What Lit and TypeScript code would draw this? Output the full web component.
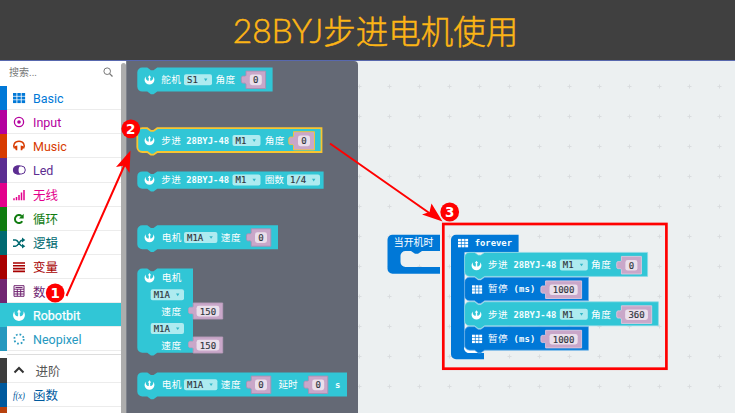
import { LitElement, html, css, svg } from "lit";
import { customElement } from "lit/decorators.js";

const TEAL = "#31c6d6";
const BLUE = "#0078d7";

const robot = (cx: number, cy: number, s = 1) => svg`
  <g transform="translate(${cx} ${cy}) scale(${s})" fill="#fff">
    <path d="M-4.200-3.600C-7-1-5.800 5.600 0 5.600S7-1 4.200-3.600C4.900-1.200 3.300 1.300.9 1.300L.7-2.300 1.900-2.600 0-5.200-1.900-2.600-.7-2.300-.9 1.300C-3.300 1.300-4.900-1.200-4.200-3.600Z"/>
  </g>`;

const grid = (x: number, y: number, color = "#fff", w = 10) => {
  const cw = w * 0.29, ch = w * 0.24;
  return svg`<g fill=${color}>${[0, 1, 2].map((r) => [0, 1, 2].map((c) => svg`
    <rect x=${x + c * w * 0.36} y=${y + r * w * 0.3} width=${cw} height=${ch}/>`))}</g>`;
};

// Statement block outline with the notch on top and the matching tab below
const block = (x: number, y: number, r: number, b: number, fill: string, stroke = "none", sw = 0) => svg`
  <path fill=${fill} stroke=${stroke} stroke-width=${sw}
    d="M${x} ${y + 5}a5 5 0 0 1 5-5H${x + 10}l3.6 2.7h2.6L${x + 20} ${y}H${r}V${b}H${x + 20}l-3.8 2.7h-2.6L${x + 10} ${b}H${x + 5}a5 5 0 0 1-5-5Z"/>`;

const cjk = (t: string, x: number, cy: number, w: number) => svg`
  <text class="cjk" x=${x} y=${cy + 3.7} textLength=${w}>${t}</text>`;

const mono = (t: string, x: number, cy: number, w: number) => svg`
  <text class="mono" x=${x} y=${cy + 3.2} textLength=${w}>${t}</text>`;

const drop = (t: string, x: number, cy: number, w: number) => svg`
  <rect x=${x} y=${cy - 5.5} width=${w} height="11" rx="2" fill="#aeebf0"/>
  <text class="val" x=${x + 3} y=${cy + 3.4} textLength=${t.length * 5.4}>${t}</text>
  <path d="M${x + w - 8} ${cy - 1.2}h3.4l-1.7 2.6Z" fill="#31b6c6"/>`;

const num = (t: string, x: number, cy: number, w: number, stroke = "#aa8fb2", h = 17.4) => {
  const iw = t.length * 5.4 + 6.6, ix = x + (w - iw) / 2, top = cy - h / 2;
  return svg`
    <path fill="#c9a7c9" stroke=${stroke} stroke-width=".9"
      d="M${x} ${top}h${w}v${h}h${-w}v${-4.5}c-1-2.2-4.7 1-4.7-3V${cy - 1.5}c0-4 3.700-1 4.700-3Z"/>
    <rect x=${ix} y=${cy - 5.2} width=${iw} height="10.6" rx="2.4" fill="#eadfeb"/>
    <text class="val" x=${x + w / 2 - t.length * 2.7} y=${cy + 3.6} textLength=${t.length * 5.4}>${t}</text>`;
};

const catIcons: Record<string, unknown> = {
  basic: grid(4, 3, BLUE, 12),
  input: svg`<circle cx="10" cy="8" r="4.600" fill="none" stroke="#b4009e" stroke-width="1.300"/><circle cx="10" cy="8" r="1.800" fill="#b4009e"/>`,
  music: svg`<path d="M5.500 10.500C3.600 7 5.500 3.300 10 3.300s6.400 3.700 4.500 7.200" fill="none" stroke="#d83b01" stroke-width="1.500"/><path d="M5.300 8.300 8.300 7.400V12.300H6.800ZM14.700 8.300 11.700 7.400V12.300H13.200Z" fill="#d83b01"/>`,
  led: svg`<rect x="4.300" y="4" width="12" height="8" rx="4" fill="none" stroke="#5c2d91" stroke-width="1"/><path d="M8.500 3.600a4.400 4.400 0 0 0 0 8.800h2.800c-2.300-2-2.300-6.600 0-8.800Z" fill="#5c2d91"/>`,
  radio: svg`<path d="M5 13.300v-2M7.500 13.300V10M10 13.300V8M12.500 13.300V5.500M15 13.300V3" stroke="#e3008c" stroke-width="1.500"/>`,
  loops: svg`<path d="M13.300 10.200A4 4 0 1 1 12.600 5" fill="none" stroke="#107c10" stroke-width="2"/><path d="M14.700 2.800v4.800H9.900Z" fill="#107c10"/>`,
  logic: svg`<path d="M4 5h2.500c3 0 4 6.200 7 6.200H14M4 11.200h2.500c3 0 4-6.200 7-6.200H14" fill="none" stroke="#006970" stroke-width="1.500"/><path d="M13 2.600 16.300 5 13 7.400ZM13 8.800l3.300 2.400L13 13.600Z" fill="#006970"/>`,
  vars: svg`<path d="M4 4h12M4 6.800h12M4 9.600h12M4 12.400h12" stroke="#a80000" stroke-width="1.600"/>`,
  math: svg`<path d="M5 2.700h10v10.600H5ZM5 6.200h10M5 8.600h10M5 11h10M8.300 6v7M11.700 6v7M6.500 4.500h7" fill="none" stroke="#712672" stroke-width="1"/>`,
  robot: robot(10, 8, 1.05),
  neo: svg`<circle cx="10" cy="8" r="4.700" fill="none" stroke="#2699bf" stroke-width="1.800" stroke-dasharray="1.700 1.990"/>`,
  up: svg`<path d="M5.500 10.500 10 6l4.500 4.500" fill="none" stroke="#333" stroke-width="2"/>`,
  fx: svg`<text x="4" y="11.500" font-family="Liberation Serif, serif" font-style="italic" font-size="10.500" fill="#005a9e" textLength="12" lengthAdjust="spacingAndGlyphs">f(x)</text>`,
};

const cats = [
  ["basic", "Basic", BLUE, "c-basic"],
  ["input", "Input", "#b4009e", "c-input"],
  ["music", "Music", "#d83b01", "c-music"],
  ["led", "Led", "#5c2d91", "c-led"],
  ["radio", "无线", "#e3008c", "c-radio"],
  ["loops", "循环", "#107c10", "c-loops"],
  ["logic", "逻辑", "#006970", "c-logic"],
  ["vars", "变量", "#a80000", "c-vars"],
  ["math", "数", "#712672", "c-math"],
  ["robot", "Robotbit", TEAL, "c-robot"],
  ["neo", "Neopixel", "#2699bf", "c-neo"],
];
const more = [
  ["up", "进阶", "#3c3c3c", "c-up"],
  ["fx", "函数", "#005a9e", "c-fx"],
  ["", "", "#b7410e", ""],
];

@customElement("block-toolbox")
export class BlockToolbox extends LitElement {
  static styles = css`
    :host { display: flex; width: 127px; flex: none; background: #fff; font: 12.500px Roboto, "Noto Sans CJK SC", sans-serif; }
    .list { width: 121px; flex: none; overflow: hidden; }
    .search { height: 25px; display: flex; align-items: center; justify-content: space-between; padding: 0 8px 4px 9px; box-sizing: border-box; color: #777; font-size: 10px; }
    .row { height: 24.140px; display: flex; align-items: center; box-sizing: border-box; border-left: 7px solid var(--c); color: var(--c); position: relative; }
    .row::after { content: ""; position: absolute; left: 0; right: 0; bottom: 0; height: 1px; background: #ececec; }
    .row svg { width: 20px; height: 16px; margin: 0 4px 0 2px; flex: none; }
    .row.c-robot { background: #31c6d6; color: #fff; -webkit-text-stroke: .25px #fff; }
    .row.c-up { color: #555; }
    .c-up span { padding-left: 2.500px; }
    .gap { height: 7px; box-sizing: border-box; display: flex; align-items: center; }
    .gap::after { content: ""; height: 1px; width: 114px; margin-left: 7px; background: #ddd; }
    .bar { width: 5px; margin: 2px 0 0; border-radius: 3px 3px 0 0; background: #adadad; }
    .edge { width: 1px; background: #7e828b; }
  `;
  row(c: string[]) {
    return html`<div class="row ${c[3]}" style="--c:${c[2]}">
      ${c[0] ? html`<svg viewBox="0 0 20 16">${catIcons[c[0]]}</svg><span>${c[1]}</span>` : ""}</div>`;
  }
  render() {
    return html`<div class="list">
        <div class="search"><span>搜索...</span>
          <svg width="10" height="10" viewBox="0 0 10 10"><path d="M6.600 6.600 9.500 9.500" stroke="#777" stroke-width="1.300"/><circle cx="4.200" cy="4.200" r="3.300" fill="none" stroke="#777" stroke-width="1"/></svg>
        </div>
        ${cats.map((c) => this.row(c))}
        <div class="gap"></div>
        ${more.map((c) => this.row(c))}
      </div>
      <div class="bar"></div><div class="edge"></div>`;
  }
}

const canvasText = css`
  :host { display: block; }
  svg { display: block; }
  .cjk { font: 9.600px "Noto Sans CJK SC", sans-serif; fill: #fff; }
  .mono { font: bold 8.900px "DejaVu Sans Mono", monospace; fill: #f4feff; }
  .val { font: 9px "DejaVu Sans Mono", monospace; fill: #30353d; stroke: #30353d; stroke-width: .15px; }
`;

@customElement("block-flyout")
export class BlockFlyout extends LitElement {
  static styles = [canvasText, css`
    :host { width: 231px; flex: none; background: #646975; border-radius: 0 4px 0 0; }
  `];
  render() {
    return html`<svg width="231" height="352" viewBox="127 61 231 352">
      ${block(137.3, 67.5, 272.6, 91.6, TEAL)}
      ${robot(149.5, 79.7, 0.87)}${cjk("舵机", 161.3, 79.5, 19.5)}${drop("S1", 184, 79.8, 28)}
      ${cjk("角度", 215.6, 79.5, 19.5)}${num("0", 246, 79.8, 19.6)}

      ${block(137.3, 128.200, 321.5, 152, TEAL, "#f7c531", 1.800)}
      ${robot(149.5, 140.5, 0.87)}${cjk("步进", 161.3, 140.2, 19.5)}${mono("28BYJ-48", 186.2, 140.5, 43)}
      ${drop("M1", 232.5, 140.500, 28)}${cjk("角度", 264.8, 140.2, 19.5)}
      ${num("0", 293.5, 140.8, 21, "#f7c531", 18.2)}

      ${block(137.3, 171.4, 323.6, 188.800, TEAL)}
      ${robot(149.5, 180, 0.87)}${cjk("步进", 161.3, 179.6, 19.5)}${mono("28BYJ-48", 186.2, 179.900, 43)}
      ${drop("M1", 232.5, 180, 28)}${cjk("圈数", 264.8, 179.6, 19)}${drop("1/4", 287, 180, 33)}

      ${block(137.3, 225.3, 278, 249.2, TEAL)}
      ${robot(149.5, 237.4, 0.87)}${cjk("电机", 161.8, 237.1, 19.5)}${drop("M1A", 184, 237.4, 33.4)}
      ${cjk("速度", 220.800, 237.1, 19.8)}${num("0", 251.2, 237.5, 19.6)}

      ${block(137.3, 268.6, 193, 352.700, TEAL)}
      ${robot(149.5, 277.600, 0.87)}${cjk("电机", 161.8, 277.2, 19.5)}${drop("M1A", 150.7, 294.8, 33.3)}
      ${cjk("速度", 161.2, 310.900, 19.8)}${num("150", 193.2, 311, 29.5, "#b99cbb", 16)}
      ${drop("M1A", 150.7, 328.6, 33.3)}
      ${cjk("速度", 161.2, 345, 19.8)}${num("150", 193.2, 345, 29.5, "#b99cbb", 16)}

      ${block(137.3, 372.4, 347, 396.5, TEAL)}
      ${robot(149.5, 384.8, 0.87)}${cjk("电机", 161.8, 384.4, 19.5)}${drop("M1A", 184, 384.7, 33.4)}
      ${cjk("速度", 220.800, 384.4, 19.8)}${num("0", 251.2, 384.8, 19.6)}
      ${cjk("延时", 278.6, 384.4, 19)}${num("0", 308.6, 384.8, 19.2)}${mono("s", 335, 384.900, 5.4)}
    </svg>`;
  }
}

@customElement("block-workspace")
export class BlockWorkspace extends LitElement {
  static styles = [canvasText, css`
    :host { flex: 1; background: #ecf0f1; }
    .thin { font: 9.900px "Noto Sans CJK SC", sans-serif; fill: #fff; }
  `];
  step(y: number, right: number, val: string, w: number) {
    const cy = y + 12.5;
    return svg`${block(464.6, y, right, y + 24, TEAL, "#8fdbe8", 0.7)}
      ${robot(476.5, cy + .4, 0.87)}${cjk("步进", 488, cy - .4, 19.5)}${mono("28BYJ-48", 513.4, cy, 43)}
      ${drop("M1", 559.8, cy, 28)}${cjk("角度", 591, cy - .4, 19.8)}${num(val, 621.4, cy + .300, w, "#e0c6dd", 17.6)}`;
  }
  pause(y: number) {
    const cy = y + 12;
    return svg`${block(464.6, y, 588.5, y + 23.6, BLUE, "#6bb0ea", 0.7)}
      ${grid(472, cy - 3.9)}${cjk("暂停", 488, cy - .6, 19.5)}${mono("(ms)", 513.400, cy - .2, 22)}
      ${num("1000", 545.6, cy + .5, 36, "#e0c6dd", 17.6)}`;
  }
  render() {
    return html`<svg width="377" height="352" viewBox="358 61 377 352">
      <defs><pattern id="plus" x="374" y="71" width="30" height="30" patternUnits="userSpaceOnUse">
        <path d="M13.500 15.500h4M15.500 13.500v4" stroke="#dadddf" stroke-width="1"/></pattern></defs>
      <rect x="358" y="61" width="377" height="352" fill="url(#plus)"/>
      <path fill=${BLUE} d="M387.500 239.700a5 5 0 0 1 5-5H440V251H422l-4 2.700h-3L411 251h-5.500a5 5 0 0 0-5 5v6a5 5 0 0 0 5 5H440v6.700H392.500a5 5 0 0 1-5-5Z"/>
      <text class="thin" x="393.800" y="246" textLength="39.500">当开机时</text>
      <path fill=${BLUE} d="M451 239.700a5 5 0 0 1 5-5H518.600V252.300H464.500V348a5 5 0 0 0 5 5H484v6.200H456a5 5 0 0 1-5-5Z"/>
      <path fill="#fff" d="M464 347c0 4 2 6 6 6h12v-3h-14Z"/>
      ${grid(458, 238.900)}${mono("forever", 474.700, 242.800, 37.300)}
      ${this.pause(326.6)}${this.step(301.800, 658.4, "360", 30.3)}
      ${this.pause(277.200)}${this.step(252.400, 647.6, "0", 20)}
    </svg>`;
  }
}

@customElement("app-root")
export class AppRoot extends LitElement {
  static styles = css`
    :host { display: flex; flex-direction: column; width: 735px; height: 413px; overflow: hidden; position: relative; }
    header { height: 60px; flex: none; box-sizing: border-box; background: #404040; color: #fdb515; display: flex; align-items: center; justify-content: center; white-space: nowrap; padding: 0 0 1px 16px; -webkit-text-stroke: .5px #fdb515; }
    .latin { font: 300 33.500px Lato, sans-serif; width: 90.500px; }
    .han { font: 300 32.500px "Noto Sans CJK SC", sans-serif; width: 195px; }
    .rule { height: 1px; background: #5868ae; flex: none; }
    main { display: flex; flex: 1; min-height: 0; background: #ecf0f1; }
    .marks { position: absolute; inset: 0; }
    .n { font: bold 13.500px "DejaVu Sans", sans-serif; fill: #fff; text-anchor: middle; }
  `;
  badge(n: string, x: number, y: number) {
    return svg`<circle cx=${x} cy=${y} r="9.400" fill="#f00"/><text class="n" x=${x} y=${y + 4.8}>${n}</text>`;
  }
  render() {
    return html`
      <header><span class="latin">28BYJ</span><span class="han">步进电机使用</span></header>
      <div class="rule"></div>
      <main><block-toolbox></block-toolbox><block-flyout></block-flyout><block-workspace></block-workspace></main>
      <svg class="marks" width="735" height="413" viewBox="0 0 735 413">
        <rect x="443.300" y="224" width="223.100" height="144.700" fill="none" stroke="#f00" stroke-width="2.700"/>
        <path d="M66.500 296 125 164M330 143.500 430 213.500" stroke="#f00" stroke-width="2"/>
        <path d="M130.500 150.500 129.500 173 124.500 165.500 116 167ZM442.500 221.500 422 214.500 429.500 212 431.500 203.500Z" fill="#f00"/>
        ${this.badge("1", 55.2, 293)}${this.badge("2", 130.8, 128.8)}${this.badge("3", 449.7, 212)}
      </svg>`;
  }
}
